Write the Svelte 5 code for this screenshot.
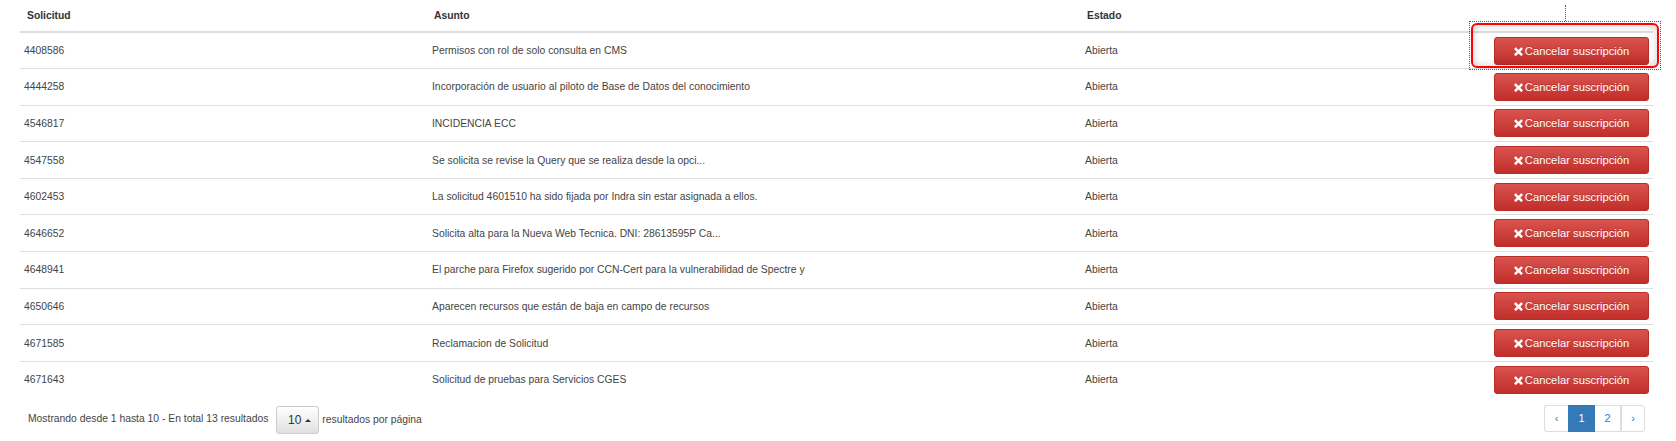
<script>
  const rows = [
    ['4408586', 'Permisos con rol de solo consulta en CMS'],
    ['4444258', 'Incorporación de usuario al piloto de Base de Datos del conocimiento'],
    ['4546817', 'INCIDENCIA ECC'],
    ['4547558', 'Se solicita se revise la Query que se realiza desde la opci...'],
    ['4602453', 'La solicitud 4601510 ha sido fijada por Indra sin estar asignada a ellos.'],
    ['4646652', 'Solicita alta para la Nueva Web Tecnica. DNI: 28613595P Ca...'],
    ['4648941', 'El parche para Firefox sugerido por CCN-Cert para la vulnerabilidad de Spectre y'],
    ['4650646', 'Aparecen recursos que están de baja en campo de recursos'],
    ['4671585', 'Reclamacion de Solicitud'],
    ['4671643', 'Solicitud de pruebas para Servicios CGES']
  ];
</script>

<div class="page">
  <table>
    <thead>
      <tr>
        <th class="c1">Solicitud</th>
        <th class="c2">Asunto</th>
        <th class="c3">Estado</th>
        <th class="c4"></th>
      </tr>
    </thead>
    <tbody>
      {#each rows as row}
        <tr>
          <td>{row[0]}</td>
          <td>{row[1]}</td>
          <td>Abierta</td>
          <td class="action">
            <button class="btn-cancel">
              <svg class="icon" viewBox="0 0 10 10" aria-hidden="true">
                <path d="M2.4 0.6 L5 3.2 L7.6 0.6 Q8 0.2 8.4 0.6 L9.6 1.8 Q10 2.2 9.6 2.6 L7 5.2 L9.6 7.8 Q10 8.2 9.6 8.6 L8.4 9.8 Q8 10.2 7.6 9.8 L5 7.2 L2.4 9.8 Q2 10.2 1.6 9.8 L0.4 8.6 Q0 8.2 0.4 7.8 L3 5.2 L0.4 2.6 Q0 2.2 0.4 1.8 L1.6 0.6 Q2 0.2 2.4 0.6 Z" />
              </svg>
              <span class="label">Cancelar suscripción</span>
            </button>
          </td>
        </tr>
      {/each}
    </tbody>
  </table>

  <div class="footer">
    <div class="summary">
      <span class="total">Mostrando desde 1 hasta 10 - En total 13 resultados</span>
      <button class="page-size">10 <span class="caret"></span></button>
      <span class="per-page">resultados por página</span>
    </div>
    <ul class="pagination">
      <li><a href="#prev">‹</a></li>
      <li class="active"><a href="#p1">1</a></li>
      <li class="second"><a href="#p2">2</a></li>
      <li><a href="#next">›</a></li>
    </ul>
  </div>

  <!-- marca de la captura sobre la primera fila -->
  <div class="leader"></div>
  <div class="focus-box"><div class="focus-ring"></div></div>
</div>

<style>
  :global(body) {
    margin: 0;
    background: #fff;
    font-family: "Liberation Sans", Arial, sans-serif;
  }

  .page {
    position: relative;
    width: 1676px;
    height: 441px;
    padding: 0 23px 0 20px;
    box-sizing: border-box;
    overflow: hidden;
    color: #333;
  }

  table {
    width: 1633px;
    border-collapse: collapse;
    table-layout: fixed;
    font-size: 10.35px;
  }

  th {
    height: 32px;
    padding: 0 0 0 6px;
    text-align: left;
    font-size: 10.35px;
    font-weight: bold;
    border-bottom: 2px solid #ddd;
    box-sizing: border-box;
  }

  th.c1 { padding-left: 7px; }

  .c1 { width: 408px; }
  .c2 { width: 653px; }
  .c3 { width: 380px; }

  td {
    height: 36.6px;
    padding: 0 0 0 4px;
    border-top: 1px solid #ddd;
    box-sizing: border-box;
    color: #444;
  }

  td.action {
    padding: 0 4px 0 0;
    text-align: right;
  }

  .btn-cancel {
    width: 155px;
    height: 28px;
    padding: 0;
    font-family: inherit;
    font-size: 11.25px;
    color: #fff;
    text-shadow: 0 -1px 0 rgba(0, 0, 0, 0.2);
    background: linear-gradient(to bottom, #d9534f 0%, #c12e2a 100%);
    border: 1px solid #b92c28;
    border-radius: 3px;
    vertical-align: middle;
  }

  .icon {
    width: 9px;
    height: 9px;
    fill: #fff;
    vertical-align: -1px;
  }

  .label {
    margin-left: -1px;
  }

  .footer {
    display: flex;
    justify-content: space-between;
    align-items: flex-start;
    padding: 8px 8px 0 8px;
  }

  .summary {
    display: flex;
    align-items: center;
    font-size: 10.35px;
    color: #444;
  }

  .total {
    position: relative;
    top: -1px;
  }

  .page-size {
    width: 43px;
    height: 28px;
    margin: 0 3px 0 8px;
    padding: 0 0 0 3px;
    font-family: inherit;
    font-size: 12px;
    color: #333;
    background: linear-gradient(to bottom, #fff, #e0e0e0);
    border: 1px solid #ccc;
    border-radius: 3px;
  }

  .caret {
    display: inline-block;
    vertical-align: middle;
    border-left: 3px solid transparent;
    border-right: 3px solid transparent;
    border-bottom: 3px solid #333;
  }

  .pagination {
    display: flex;
    margin: -1px 0 0;
    padding: 0;
    list-style: none;
    font-size: 11px;
  }

  .pagination a {
    display: block;
    width: 24px;
    height: 27px;
    line-height: 25px;
    box-sizing: border-box;
    text-align: center;
    color: #337ab7;
    text-decoration: none;
    border: 1px solid #ddd;
  }

  .pagination li:first-child a {
    border-right: 0;
    border-radius: 3px 0 0 3px;
  }

  .pagination li:last-child a {
    border-radius: 0 3px 3px 0;
  }

  .pagination .second a {
    width: 26px;
    border-left: 0;
  }

  .pagination .active a {
    width: 27px;
    color: #fff;
    background: #337ab7;
    border-color: #337ab7;
  }

  .leader {
    position: absolute;
    left: 1565px;
    top: 5px;
    height: 16px;
    border-left: 1px dotted #555;
  }

  .focus-box {
    position: absolute;
    left: 1469px;
    top: 21px;
    width: 192px;
    height: 49px;
    box-sizing: border-box;
    border: 1px dotted #555;
  }

  .focus-ring {
    position: absolute;
    inset: 1px;
    border: 2px solid #f00;
    border-radius: 6px;
    box-shadow: inset 0 0 8px rgba(0, 0, 0, 0.2);
  }
</style>
